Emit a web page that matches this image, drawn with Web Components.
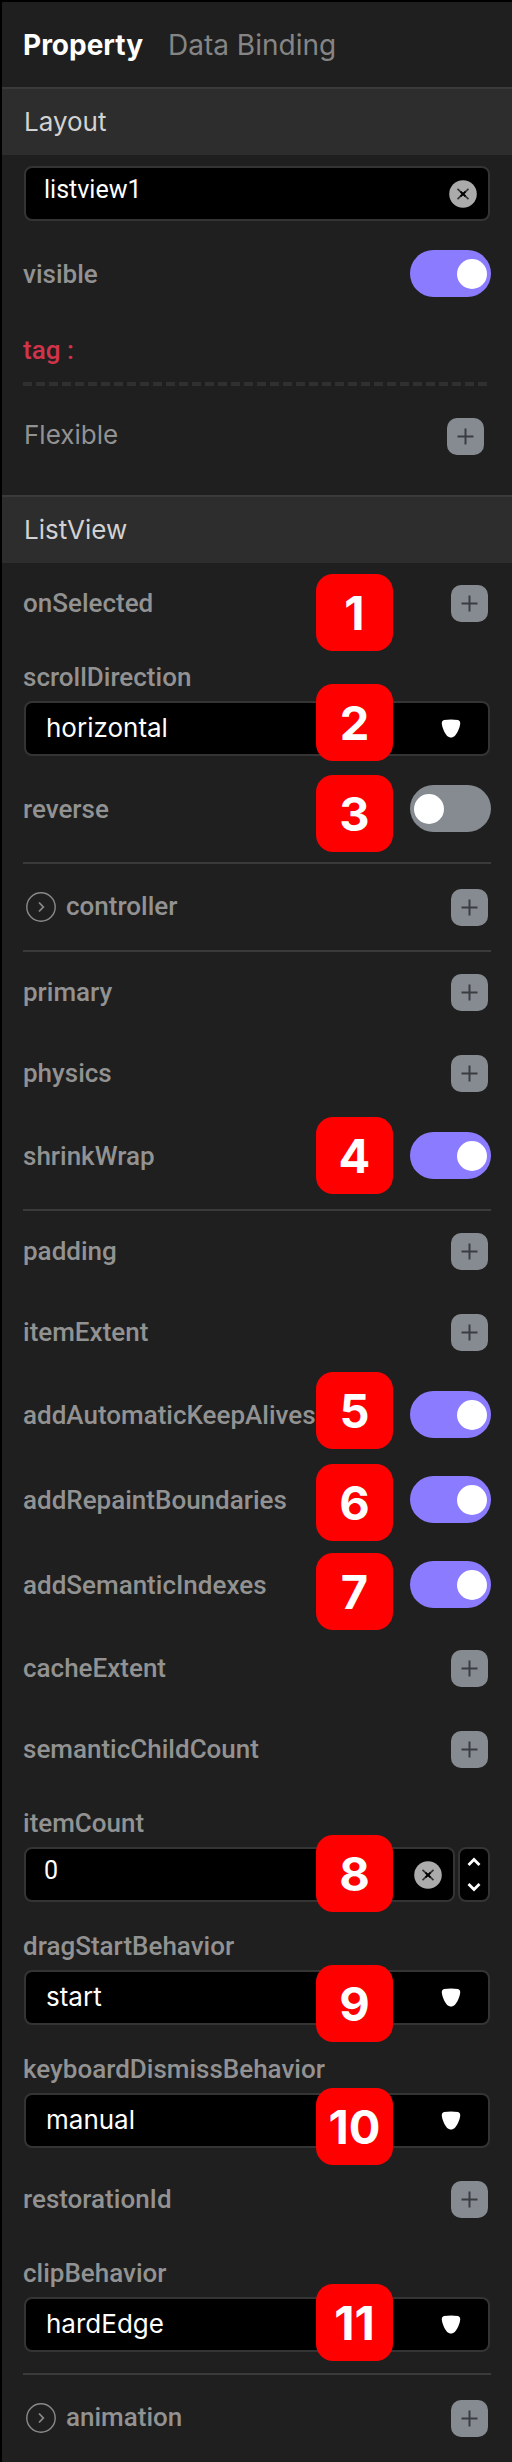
<!DOCTYPE html>
<html lang="en">
<head>
<meta charset="utf-8">
<meta name="viewport" content="width=device-width, initial-scale=1">
<title>Property</title>
<style>
  html { background: #1f1f1f; }
  body { margin: 0; }
</style>
</head>
<body>
<property-panel>
  <panel-tabs></panel-tabs>
  <panel-section heading="Layout">
    <text-field name="widget name" value="listview1"></text-field>
    <switch-row checked>visible</switch-row>
    <tag-row>tag :</tag-row>
    <action-row variant="layout">Flexible</action-row>
  </panel-section>
  <panel-section heading="ListView">
    <action-row>onSelected</action-row>
    <select-field options="horizontal,vertical">scrollDirection</select-field>
    <switch-row>reverse</switch-row>
    <row-divider></row-divider>
    <action-row variant="group">controller</action-row>
    <row-divider joined></row-divider>
    <action-row>primary</action-row>
    <action-row>physics</action-row>
    <switch-row checked>shrinkWrap</switch-row>
    <row-divider></row-divider>
    <action-row>padding</action-row>
    <action-row>itemExtent</action-row>
    <switch-row checked>addAutomaticKeepAlives</switch-row>
    <switch-row checked>addRepaintBoundaries</switch-row>
    <switch-row checked>addSemanticIndexes</switch-row>
    <action-row>cacheExtent</action-row>
    <action-row>semanticChildCount</action-row>
    <number-field value="0">itemCount</number-field>
    <select-field options="start,down">dragStartBehavior</select-field>
    <select-field options="manual,onDrag">keyboardDismissBehavior</select-field>
    <action-row>restorationId</action-row>
    <select-field options="hardEdge,none,antiAlias">clipBehavior</select-field>
    <row-divider></row-divider>
    <action-row variant="group">animation</action-row>
  </panel-section>
  <number-pin slot="pins" y="574">1</number-pin>
  <number-pin slot="pins" y="684">2</number-pin>
  <number-pin slot="pins" y="775">3</number-pin>
  <number-pin slot="pins" y="1117">4</number-pin>
  <number-pin slot="pins" y="1372">5</number-pin>
  <number-pin slot="pins" y="1464">6</number-pin>
  <number-pin slot="pins" y="1553">7</number-pin>
  <number-pin slot="pins" y="1835">8</number-pin>
  <number-pin slot="pins" y="1965">9</number-pin>
  <number-pin slot="pins" y="2088">10</number-pin>
  <number-pin slot="pins" y="2284">11</number-pin>
</property-panel>

<script>
const base = `
  *, *::before, *::after { box-sizing: border-box; }
  :host { display: block; }
  button, input, select { font: inherit; color: inherit; margin: 0; padding: 0; border: 0; background: none; outline-offset: 2px; }
  button, select, label { cursor: pointer; }
`;
const box = `
  .box { display: flex; align-items: center; flex: 1; min-width: 0; height: 55px; border: 2px solid #343434; border-radius: 8px; background: #000; color: #fff; }
  .box input { flex: 1; min-width: 0; height: 45px; padding: 0 0 2px 18px; font: 400 25px Roboto, sans-serif; align-self: flex-start; appearance: textfield; }
  input::-webkit-inner-spin-button { appearance: none; margin: 0; }
  .clear { flex: none; width: 28px; height: 28px; margin-right: 11px; }
  svg { display: block; }
`;
const clearButton = `
  <button class="clear" type="button" aria-label="Clear">
    <svg width="28" height="28" viewBox="0 0 28 28"><circle cx="14" cy="14" r="13.8" fill="#ababab"/><path d="M8.5 8.8l11 10.4M19.5 8.8l-11 10.4" stroke="#333" stroke-width="1.6"/><path d="M11.5 11.6l5 4.8M16.5 11.6l-5 4.8" stroke="#000" stroke-width="2"/></svg>
  </button>`;

function define(name, css, html) {
  customElements.define(name, class extends HTMLElement {
    constructor() {
      super();
      this.attachShadow({ mode: 'open' }).innerHTML = `<style>${base}${css}</style>${html(this)}`;
    }
  });
}

define('property-panel', `
  :host { position: relative; border: solid #000; border-width: 2px 0 0 2px; min-height: 100vh; background: #1f1f1f; color: #929292; font: 500 26px/32px Roboto, "Noto Sans", sans-serif; }
`, () => `<main><slot></slot></main><slot name="pins"></slot>`);

define('panel-tabs', `
  nav { display: flex; align-items: center; gap: 25px; height: 85px; padding: 0 21px; font: 400 28px/34px Inter, sans-serif; }
  a { color: #858585; text-decoration: none; }
  a[aria-current] { color: #fff; font-weight: 700; }
`, () => `<nav><a href="#property" aria-current="page">Property</a><a href="#binding">Data Binding</a></nav>`);

define('panel-section', `
  h2 { display: flex; align-items: center; height: 68px; margin: 0; padding: 0 22px; border-top: 2px solid #3a3a3a; background: #2d2d2d; color: #d2d2d2; font: 400 26px/32px Inter, sans-serif; }
  .body { padding: 0 21px; }
`, el => `<section><h2>${el.getAttribute('heading')}</h2><div class="body"><slot></slot></div></section>`);

define('text-field', `${box}
  :host { padding: 11px 1px; }
`, el => `<div class="box"><input type="text" aria-label="${el.getAttribute('name')}" value="${el.getAttribute('value')}">${clearButton}</div>`);

define('switch-row', `
  label { display: flex; align-items: center; justify-content: space-between; height: 85px; padding-bottom: 2px; }
  input { appearance: none; flex: none; display: flex; align-items: center; width: 81px; height: 47px; padding: 0 4px; border-radius: 24px; background: #868b92; cursor: pointer; }
  input::before { content: ""; width: 30px; height: 30px; border-radius: 50%; background: #fff; }
  input:checked { justify-content: flex-end; background: #8b7bff; }
`, el => `<label><slot></slot><input type="checkbox" role="switch"${el.hasAttribute('checked') ? ' checked' : ''}></label>`);

define('tag-row', `
  .tag { display: flex; align-items: center; height: 65px; color: #d0344b; }
  .dashes { height: 4px; background: repeating-linear-gradient(90deg, #303030 0 9px, transparent 9px 13px); }
`, () => `<div class="tag"><slot></slot></div><div class="dashes"></div>`);

define('action-row', `
  .row { display: flex; align-items: center; height: 81px; }
  .name { flex: 1; padding-bottom: 2px; }
  .add { flex: none; width: 37px; height: 37px; margin-right: 3px; border-radius: 10px; background: #868b92; }
  .toggle { width: 30px; height: 30px; margin: 0 10px 0 3px; display: none; }
  svg { display: block; }
  :host([variant="group"]) .row { height: 86px; }
  :host([variant="group"]) .toggle { display: block; }
  :host([variant="layout"]) { padding-bottom: 9px; }
  :host([variant="layout"]) .row { height: 100px; font: 400 26px/32px Inter, sans-serif; }
  :host([variant="layout"]) .add { margin-right: 7px; }
  :host([variant="layout"]) .name { padding-left: 1px; }
`, el => `<div class="row">
  <button class="toggle" type="button" aria-label="Expand ${el.textContent}"><svg width="30" height="30" viewBox="0 0 30 30" fill="none" stroke="#8a8a8a"><circle cx="15" cy="15" r="14.2" stroke-width="1.4"/><path d="M13 10.5l4.3 4.5-4.3 4.5" stroke-width="1.8"/></svg></button>
  <span class="name"><slot></slot></span>
  <button class="add" type="button" aria-label="Add ${el.textContent}"><svg width="37" height="37" viewBox="0 0 37 37"><path d="M10.5 18.5h16M18.5 10.5v16" stroke="#3a3d40" stroke-width="2"/></svg></button>
</div>`);

define('row-divider', `
  hr { height: 2px; margin: 10px 0 0; border: 0; background: #3a3a3a; }
  :host([joined]) hr { margin: 0; }
`, () => `<hr>`);

define('select-field', `
  label { display: block; padding: 17px 0 8px; }
  .wrap { display: grid; align-items: center; margin: 0 1px; padding-bottom: 11px; }
  select { grid-area: 1 / 1; appearance: none; width: 100%; height: 55px; padding: 0 60px 2px 20px; border: 2px solid #343434; border-radius: 8px; background: #000; color: #fff; font: 400 26px Inter, sans-serif; }
  svg { grid-area: 1 / 1; justify-self: end; margin-right: 29px; pointer-events: none; }
`, el => `<label for="s"><slot></slot></label><div class="wrap"><select id="s">${el.getAttribute('options').split(',').map(o => `<option>${o}</option>`).join('')}</select><svg width="20" height="19" viewBox="0 0 20 19"><path d="M3 1Q10 0 17 1Q20 2 19 6C18 11 15 17 12 18Q10 19 8 18C5 17 2 11 1 6Q0 2 3 1z" fill="#fff"/></svg></div>`);

define('number-field', `${box}
  label { display: block; padding: 17px 0 8px; }
  .line { display: flex; gap: 3px; margin: 0 1px; padding-bottom: 11px; }
  .steps { flex: none; display: flex; flex-direction: column; width: 32px; height: 55px; border: 2px solid #343434; border-radius: 8px; background: #000; }
  .steps button { flex: 1; display: grid; place-items: center; }
`, el => `<label for="n"><slot></slot></label><div class="line"><div class="box"><input id="n" type="number" value="${el.getAttribute('value')}">${clearButton}</div>
  <div class="steps"><button type="button" aria-label="Increase"><svg width="14" height="10" viewBox="0 0 14 10"><path d="M1.5 8L7 2.5 12.5 8" fill="none" stroke="#fff" stroke-width="2.8"/></svg></button><button type="button" aria-label="Decrease"><svg width="14" height="10" viewBox="0 0 14 10"><path d="M1.5 2L7 7.5 12.5 2" fill="none" stroke="#fff" stroke-width="2.8"/></svg></button></div></div>`);

/* Callout numbers pinned over the panel. */
define('number-pin', `
  :host { position: absolute; right: 119px; display: grid; place-items: center; width: 77px; height: 77px; border-radius: 17px; background: #f00; color: #fff; font: 700 47px/56px Inter, sans-serif; pointer-events: none; }
`, el => `<style>:host { top: ${el.getAttribute('y') - 2}px; }</style><slot></slot>`);
</script>
</body>
</html>
